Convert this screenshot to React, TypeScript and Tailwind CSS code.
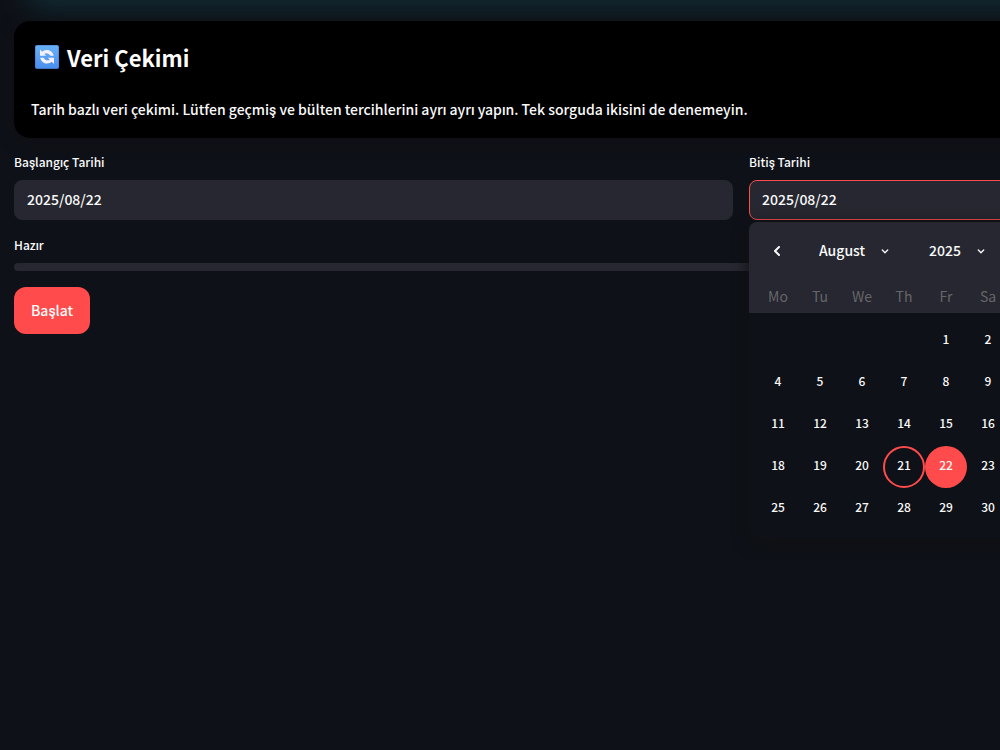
import { useState } from 'react';

const WEEKDAYS = ['Mo', 'Tu', 'We', 'Th', 'Fr', 'Sa', 'Su'];
const MONTHS = [
  'January', 'February', 'March', 'April', 'May', 'June',
  'July', 'August', 'September', 'October', 'November', 'December',
];
const YEARS = [2023, 2024, 2025, 2026];
const TODAY = '2025/08/21';

const pad = (n: number) => String(n).padStart(2, '0');

function ChevronDown() {
  return (
    <svg viewBox="0 0 24 24" className="pointer-events-none size-4 shrink-0" fill="currentColor" aria-hidden="true">
      <path d="M12.7 15.3a1 1 0 0 1-1.4 0l-4-4a1 1 0 1 1 1.4-1.4l3.3 3.3 3.3-3.3a1 1 0 1 1 1.4 1.4z" />
    </svg>
  );
}

function SyncIcon() {
  return (
    <svg viewBox="0 0 24 24" className="size-6 shrink-0" aria-hidden="true">
      <defs>
        <linearGradient id="tile" x1="0" y1="0" x2="0" y2="1">
          <stop offset="0" stopColor="#69b2f8" />
          <stop offset="1" stopColor="#4a8fee" />
        </linearGradient>
      </defs>
      <rect width="24" height="24" rx="2" fill="#3f78c8" />
      <rect x="0.5" y="0.5" width="23" height="22.5" rx="1.5" fill="url(#tile)" />
      <g fill="#f5f0fc">
        <path d="M5 4.6v6.200h6.200L9.200 8.800c2.200-1.300 5-.3 6.200 2h3.400C18 7.200 15.200 5 12 5c-1.900 0-3.600.6-4.900 1.700z" />
        <path d="M19 18.900v-6.200h-6.200l2 2c-2.200 1.300-5 .3-6.200-2H5.200c.8 3.600 3.600 5.800 6.800 5.800 1.900 0 3.600-.6 4.900-1.700z" />
      </g>
    </svg>
  );
}

function Calendar({ value, onPick }: { value: string; onPick: (v: string) => void }) {
  const [month, setMonth] = useState(7);
  const [year, setYear] = useState(2025);
  const offset = (new Date(year, month, 1).getDay() + 6) % 7;
  const count = new Date(year, month + 1, 0).getDate();
  const cells: (number | null)[] = [
    ...Array.from({ length: offset }, () => null),
    ...Array.from({ length: count }, (_, i) => i + 1),
  ];
  const previous = () => {
    setMonth((month + 11) % 12);
    if (month === 0) setYear(year - 1);
  };
  const picker = 'appearance-none bg-transparent pb-0.5 text-sm font-medium outline-none';

  return (
    <div className="absolute top-full left-0 z-10 mt-0.5 rounded-lg bg-[#0e1117] shadow-[0_4px_16px_#101114]">
      <div className="rounded-t-lg bg-[#262730] px-2">
        <div className="flex h-[58px] items-center">
          <button type="button" aria-label="Previous month" onClick={previous} className="flex h-10 w-10 items-center justify-center">
            <svg viewBox="0 0 24 24" className="size-6" fill="none" stroke="currentColor" strokeWidth="2" strokeLinecap="round" strokeLinejoin="round" aria-hidden="true">
              <path d="M14 8l-4 4 4 4" />
            </svg>
          </button>
          <label className="ml-[22px] flex items-center">
            <select aria-label="Month" value={month} onChange={(e) => setMonth(Number(e.target.value))} className={`w-[58px] ${picker}`}>
              {MONTHS.map((m, i) => <option key={m} value={i}>{m}</option>)}
            </select>
            <ChevronDown />
          </label>
          <label className="ml-9 flex items-center">
            <select aria-label="Year" value={year} onChange={(e) => setYear(Number(e.target.value))} className={`w-11 ${picker}`}>
              {YEARS.map((y) => <option key={y}>{y}</option>)}
            </select>
            <ChevronDown />
          </label>
        </div>
        <div className="grid h-[33px] grid-cols-[repeat(7,42px)] items-center pb-0.5 text-center text-sm text-[#666669]">
          {WEEKDAYS.map((d) => <span key={d}>{d}</span>)}
        </div>
      </div>
      <div className="grid grid-cols-[repeat(7,42px)] px-2 pt-[7px] pb-2">
        {cells.map((day, i) => {
          if (day === null) return <span key={i} />;
          const date = `${year}/${pad(month + 1)}/${pad(day)}`;
          const look =
            date === value ? 'bg-[#ff4b4b]' : date === TODAY ? 'border-2 border-[#ff4b4b]' : '';
          return (
            <button key={i} type="button" onClick={() => onPick(date)} className={`flex size-[42px] items-center justify-center rounded-full pb-1 text-xs font-medium ${look}`}>
              {day}
            </button>
          );
        })}
      </div>
    </div>
  );
}

export default function App() {
  const [start, setStart] = useState('2025/08/22');
  const [end, setEnd] = useState('2025/08/22');
  const field = 'h-10 w-full rounded-lg border bg-[#262730] px-3 pb-0.5 text-sm font-medium outline-none';
  const label = 'mb-2 block text-xs leading-5 font-medium';

  return (
    <div className="relative min-h-screen overflow-hidden bg-[#0e1117] font-['Noto_Sans_CJK_SC',Roboto,sans-serif] text-[#fafafa]">
      <div className="absolute inset-x-0 bottom-full ml-10 h-10 w-full shadow-[0_0_32px_10px_#122c35]" />
      <main className="relative ml-3.5 w-[145.4%] pt-[21px]">
        <section className="rounded-2xl bg-black px-[17px] pt-5 pb-[17px] shadow-[0_4px_16px_#101015]">
          <h2 className="ml-1 flex h-8 items-center gap-2 text-[22px] font-bold text-white">
            <SyncIcon />
            Veri Çekimi
          </h2>
          <p className="mt-6 text-sm leading-6 font-medium">
            Tarih bazlı veri çekimi. Lütfen geçmiş ve bülten tercihlerini ayrı ayrı yapın. Tek sorguda ikisini de denemeyin.
          </p>
        </section>

        <div className="mt-3.5 grid grid-cols-2 gap-4">
          <div>
            <label htmlFor="start" className={label}>Başlangıç Tarihi</label>
            <input id="start" value={start} onChange={(e) => setStart(e.target.value)} className={`${field} border-[#262730]`} />
          </div>
          <div className="relative">
            <label htmlFor="end" className={label}>Bitiş Tarihi</label>
            <input id="end" value={end} onChange={(e) => setEnd(e.target.value)} className={`${field} border-[#ff4b4b]`} />
            <Calendar value={end} onPick={setEnd} />
          </div>
        </div>

        <p className="mt-[15px] mb-2 text-xs leading-5 font-medium">Hazır</p>
        <div role="progressbar" aria-valuenow={0} aria-label="Hazır" className="h-2 rounded-full bg-[#262730]" />
        <button type="button" className="mt-4 h-[47px] rounded-xl bg-[#ff4b4b] px-[17px] pb-0.5 text-sm font-medium">Başlat</button>
      </main>
    </div>
  );
}
